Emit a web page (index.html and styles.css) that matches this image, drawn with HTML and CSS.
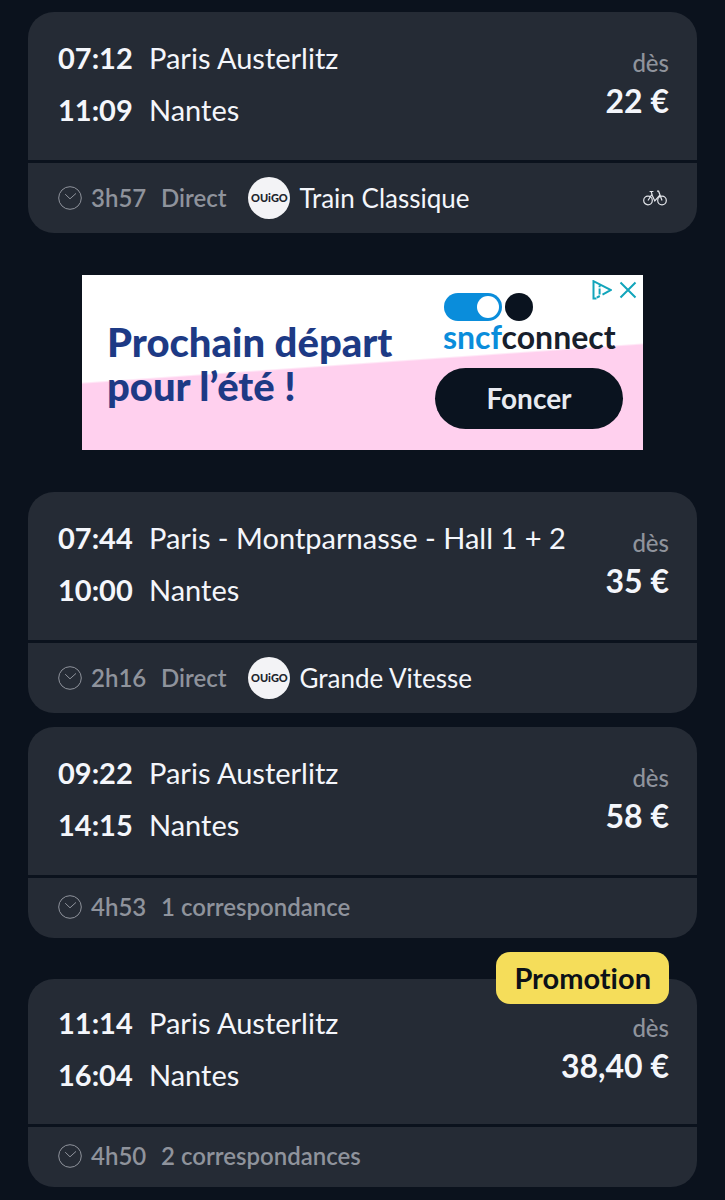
FILE: index.html
```
<!DOCTYPE html>
<html lang="fr">
<head>
  <meta charset="UTF-8" />
  <meta name="viewport" content="width=device-width, initial-scale=1" />
  <title>Paris - Nantes</title>
  <link rel="stylesheet" href="styles.css">
</head>
<body>
  <!-- Icônes partagées -->
  <svg class="sprite" aria-hidden="true">
    <symbol id="clock" viewBox="0 0 24 24">
      <circle cx="12" cy="12" r="11.3" />
      <path d="M7.2 8.2l4.8 4.6 6-5.4" />
    </symbol>
    <symbol id="bike" viewBox="0 0 24 16">
      <circle cx="5" cy="10.5" r="4.3" />
      <circle cx="19" cy="10.5" r="4.3" />
      <path d="M5 10.5l3.8-6 3 6.4 5-5.8M9.2 5L8.2 1.7M6.6 1.5h3.8M14 1.2h1.6l3.4 9.3" />
    </symbol>
  </svg>

  <main class="results">
    <article class="card">
      <div class="card-main">
        <ol class="stops">
          <li><time>07:12</time>Paris Austerlitz</li>
          <li><time>11:09</time>Nantes</li>
        </ol>
        <p class="price"><span>dès</span><strong>22 €</strong></p>
      </div>
      <div class="card-info">
        <svg class="clock"><use href="#clock" /></svg>
        <span class="duration">3h57</span>
        <span class="changes">Direct</span>
        <span class="ouigo">OUiGO</span>
        <span class="train">Train Classique</span>
        <svg class="bike" role="img" aria-label="Vélo"><use href="#bike" /></svg>
      </div>
    </article>

    <aside class="ad">
      <p class="ad-title">Prochain départ<br>pour l’été !</p>
      <div class="ad-brand">
        <svg class="ad-logo" viewBox="0 0 90 28" aria-hidden="true">
          <rect width="58" height="28" rx="14" fill="#0a8ddb" />
          <circle cx="44" cy="14" r="11" fill="#fff" />
          <circle cx="75" cy="14" r="14" fill="#0a131f" />
        </svg>
        <p class="ad-name"><span>sncf</span>connect</p>
        <a class="ad-cta" href="#">Foncer</a>
      </div>
      <div class="ad-tools">
        <button type="button" aria-label="Infos sur la publicité">
          <svg viewBox="0 0 20 20"><path d="M4.5 18.6H1.5V1.2L19 10l-8.5 4.6M4.8 17.6l3-1.6M7.6 8.6v6M7.6 5.4v1.8" /></svg>
        </button>
        <button type="button" aria-label="Fermer la publicité">
          <svg viewBox="0 0 20 20"><path d="M2.5 2.5l15 15M17.5 2.5l-15 15" /></svg>
        </button>
      </div>
    </aside>

    <article class="card">
      <div class="card-main">
        <ol class="stops">
          <li><time>07:44</time>Paris - Montparnasse - Hall 1 + 2</li>
          <li><time>10:00</time>Nantes</li>
        </ol>
        <p class="price"><span>dès</span><strong>35 €</strong></p>
      </div>
      <div class="card-info">
        <svg class="clock"><use href="#clock" /></svg>
        <span class="duration">2h16</span>
        <span class="changes">Direct</span>
        <span class="ouigo">OUiGO</span>
        <span class="train">Grande Vitesse</span>
      </div>
    </article>

    <article class="card">
      <div class="card-main">
        <ol class="stops">
          <li><time>09:22</time>Paris Austerlitz</li>
          <li><time>14:15</time>Nantes</li>
        </ol>
        <p class="price"><span>dès</span><strong>58 €</strong></p>
      </div>
      <div class="card-info">
        <svg class="clock"><use href="#clock" /></svg>
        <span class="duration">4h53</span>
        <span class="changes">1 correspondance</span>
      </div>
    </article>

    <article class="card card-promo">
      <span class="promo">Promotion</span>
      <div class="card-main">
        <ol class="stops">
          <li><time>11:14</time>Paris Austerlitz</li>
          <li><time>16:04</time>Nantes</li>
        </ol>
        <p class="price"><span>dès</span><strong>38,40 €</strong></p>
      </div>
      <div class="card-info">
        <svg class="clock"><use href="#clock" /></svg>
        <span class="duration">4h50</span>
        <span class="changes">2 correspondances</span>
      </div>
    </article>
  </main>
</body>
</html>
```
FILE: styles.css
```
* {
  margin: 0;
  padding: 0;
  box-sizing: border-box;
}
body {
  font-family: Lato, "Open Sans", sans-serif;
  font-variant-ligatures: none;
  background: #0b121d;
  color: #f4f6fb;
}
svg {
  display: block;
  fill: none;
}
.sprite {
  position: absolute;
  width: 0;
  height: 0;
}

.results {
  display: flex;
  flex-direction: column;
  gap: 14px;
  padding: 12px 28px;
}

/* Cartes de trajet */
.card {
  position: relative;
  display: flex;
  flex-direction: column;
  gap: 3px;
}
.card-main,
.card-info {
  background: #252b35;
  padding: 0 28px 0 30px;
}
.card-main {
  display: flex;
  justify-content: space-between;
  padding-top: 20px;
  padding-bottom: 24px;
  border-radius: 26px 26px 0 0;
}
.stops {
  list-style: none;
  font-size: 29px;
  line-height: 52px;
}
.stops li {
  display: flex;
}
.stops time {
  width: 91px;
  font-weight: 700;
}
.price {
  display: flex;
  flex-direction: column;
  padding-top: 12px;
  line-height: 38px;
  text-align: right;
}
.price span {
  font-size: 24px;
  font-weight: 500;
  color: #8f939c;
}
.price strong {
  font-size: 32px;
}

.card-info {
  display: flex;
  align-items: center;
  min-height: 60px;
  padding-top: 8px;
  padding-bottom: 10px;
  border-radius: 0 0 26px 26px;
  font-size: 24px;
  line-height: 42px;
  font-weight: 600;
  color: #8f939c;
}
.card-info:has(.ouigo) {
  padding-top: 14px;
  padding-bottom: 14px;
}
.clock {
  width: 24px;
  height: 24px;
  margin-right: 9px;
  stroke: #8f939c;
  stroke-width: 1;
}
.duration {
  width: 70px;
}
.ouigo {
  width: 42px;
  height: 42px;
  margin: 0 9px 0 22px;
  border-radius: 50%;
  background: #f3f3f6;
  color: #20242c;
  font: 900 11px/42px Lato, sans-serif;
  text-align: center;
}
.train {
  font-size: 26px;
  font-weight: 400;
  color: #f4f6fb;
}
.bike {
  width: 24px;
  height: 16px;
  margin-left: auto;
  margin-right: 2px;
  stroke: #e3e5ea;
  stroke-width: 1.2;
}

/* Trajet en promotion */
.card-promo {
  margin-top: 27px;
}
.card-promo .card-main {
  padding-top: 18px;
  padding-bottom: 23px;
}
.promo {
  position: absolute;
  top: -27px;
  right: 28px;
  padding: 0 18px;
  border-radius: 14px;
  background: #f5dd5a;
  color: #0c1118;
  font-size: 29px;
  line-height: 52px;
  font-weight: 700;
}

/* Bannière */
.ad {
  position: relative;
  display: flex;
  align-items: flex-start;
  justify-content: space-between;
  min-height: 175px;
  margin: 28px 54px;
  padding: 18px 20px 20px 25px;
  background: linear-gradient(176deg, #fff 50%, #ffd0ee 51%);
}
.ad-title {
  padding-top: 27px;
  font-size: 40px;
  line-height: 44px;
  font-weight: 900;
  color: #1d3a85;
}
.ad-brand {
  width: 188px;
}
.ad-logo {
  width: 90px;
  height: 28px;
  margin-left: 9px;
}
.ad-name {
  margin: 0 0 16px 8px;
  font-size: 32px;
  line-height: 31px;
  font-weight: 700;
  color: #18202c;
}
.ad-name span {
  color: #0a8ddb;
}
.ad-cta {
  display: block;
  border-radius: 31px;
  background: #0a131f;
  color: #e8eaf0;
  font-size: 28px;
  line-height: 61px;
  font-weight: 700;
  text-align: center;
  text-decoration: none;
}
.ad-tools {
  position: absolute;
  top: 5px;
  right: 5px;
  display: flex;
  gap: 6px;
}
.ad-tools button {
  border: 0;
  background: none;
}
.ad-tools svg {
  width: 20px;
  height: 20px;
  stroke: #12a5bb;
  stroke-width: 2;
}
```
